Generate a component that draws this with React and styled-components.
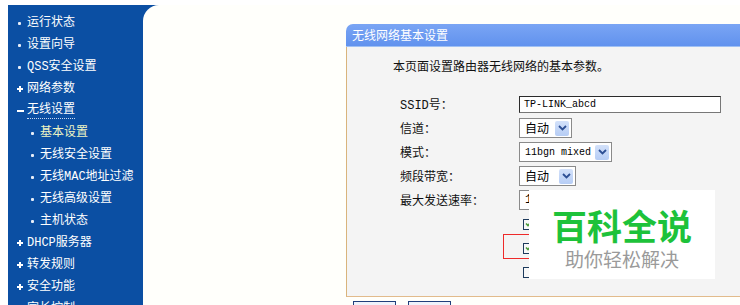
import React from "react";
import styled, { createGlobalStyle, css } from "styled-components";

const Global = createGlobalStyle`
  html, body { margin: 0; padding: 0; background: #ffffff; overflow: hidden; }
  body { font-family: "Liberation Mono", "Noto Sans CJK SC", monospace; font-size: 12px; }
`;

const Page = styled.div`
  position: relative;
  width: 740px;
  height: 305px;
  overflow: hidden;
  padding: 5px 0 0 8px;
  box-sizing: border-box;
`;

const Frame = styled.div`
  display: flex;
  background: #0b4fa3;
  height: 320px;
`;

const Sidebar = styled.ul`
  list-style: none;
  margin: 0;
  padding: 7px 0 0 0;
  width: 135px;
  flex: none;
`;

const Item = styled.li`
  height: 22px;
  display: flex;
  align-items: center;
  padding-left: ${(p) => (p.$sub ? 22 : 9)}px;
  color: ${(p) => (p.$active ? "#eef4c4" : "#ffffff")};
  font-size: 12px;
  line-height: 14px;
  white-space: nowrap;
`;

const Marker = styled.span`
  width: 10px;
  min-width: 10px;
  height: 10px;
  position: relative;
  flex: none;
  ${(p) =>
    p.$kind === "dot" &&
    css`
      &::before {
        content: "";
        position: absolute;
        left: 1px;
        top: 4px;
        width: 3px;
        height: 3px;
        background: #e8eef8;
        border-radius: 1px;
      }
    `}
  ${(p) =>
    p.$kind === "plus" &&
    css`
      &::before, &::after {
        content: "";
        position: absolute;
        background: #ffffff;
      }
      &::before { left: 0px; top: 4px; width: 6px; height: 2px; }
      &::after { left: 2px; top: 2px; width: 2px; height: 6px; }
    `}
  ${(p) =>
    p.$kind === "minus" &&
    css`
      &::before {
        content: "";
        position: absolute;
        left: 0px;
        top: 4px;
        width: 7px;
        height: 2px;
        background: #ffffff;
      }
    `}
`;

const Label = styled.span`
  ${(p) =>
    p.$focus &&
    css`
      border-bottom: 1px dotted #c8d8f0;
      padding-bottom: 1px;
    `}
`;

const Main = styled.div`
  flex: 1;
  background: #fffffb;
  border-top-left-radius: 16px;
  overflow: hidden;
  padding: 19px 0 0 203px;
`;

const Panel = styled.section`
  width: 430px;
`;

const PanelHeader = styled.div`
  height: 23px;
  background: linear-gradient(#7aa5f4, #6192ee);
  border-top-left-radius: 7px;
  color: #ffffff;
  font-size: 12px;
  display: flex;
  align-items: center;
  padding-left: 6px;
  border-bottom: 1px solid #9fc0f4;
  box-sizing: border-box;
`;

const PanelBody = styled.div`
  height: 250px;
  box-sizing: border-box;
  background: #f4f4f4;
  border-left: 1px solid #d9b47c;
  border-bottom: 1px solid #e2bb8c;
  padding: 13px 0 0 46px;
`;

const Intro = styled.p`
  margin: 0;
  line-height: 16px;
  color: #111;
  font-size: 12px;
`;

const Form = styled.div`
  margin-top: 16px;
  padding-left: 7px;
  display: grid;
  grid-template-columns: 119px auto;
  grid-auto-rows: 24px;
  align-items: center;
`;

const FieldLabel = styled.span`
  color: #111;
  font-size: 12px;
`;

const Control = styled.div`
  display: flex;
  align-items: center;
  position: relative;
  height: 100%;
`;

const TextBox = styled.div`
  width: ${(p) => p.$w}px;
  height: 17px;
  box-sizing: border-box;
  border: 1px solid #2b2b2b;
  border-right-color: #777;
  border-bottom-color: #777;
  background: #ffffff;
  font-family: "Liberation Mono", monospace;
  font-size: 10px;
  color: #000;
  display: flex;
  align-items: center;
  padding-left: 4px;
`;

const Select = styled.div`
  width: ${(p) => p.$w}px;
  height: 20px;
  box-sizing: border-box;
  border: 1px solid #8a8a8a;
  background: #ffffff;
  display: flex;
  align-items: center;
  justify-content: space-between;
  padding: 0 2px 0 5px;
  font-size: 12px;
  color: #000;
  ${(p) =>
    p.$mono &&
    css`
      font-family: "Liberation Mono", monospace;
      font-size: 10px;
    `}
`;

const Arrow = styled.span`
  width: 14px;
  height: 15px;
  background: linear-gradient(#d3e1fa, #b6cdf5);
  border-radius: 2px;
  display: flex;
  align-items: center;
  justify-content: center;
`;

const Check = styled.span`
  width: 11px;
  height: 11px;
  box-sizing: border-box;
  border: 1px solid #1d3a5c;
  background: #f8f8f8;
  margin-left: 4px;
  display: flex;
  align-items: center;
  justify-content: center;
`;

const CheckRow = styled.div`
  grid-column: 2;
  height: ${(p) => p.$h}px;
  display: flex;
  align-items: center;
  position: relative;
  ${(p) =>
    p.$flag &&
    css`
      &::before {
        content: "";
        position: absolute;
        left: -16px;
        top: -2px;
        width: 110px;
        height: 25px;
        border: 1px solid #ee2a2a;
        box-sizing: border-box;
      }
    `}
`;

const Spacer = styled.div`
  grid-column: 1;
`;

const Buttons = styled.div`
  display: flex;
  gap: 12px;
  margin: 4px 0 0 7px;
`;

const Btn = styled.div`
  width: 43px;
  height: 20px;
  box-sizing: border-box;
  border: 1px solid #203f7c;
  background: #eef2fb;
`;

const Watermark = styled.div`
  position: absolute;
  left: 529px;
  top: 190px;
  width: 186px;
  height: 89px;
  background: #ffffff;
  display: flex;
  flex-direction: column;
  align-items: center;
  padding-top: 15px;
  box-sizing: border-box;
  font-family: "Noto Sans CJK SC", sans-serif;
`;

const WmTitle = styled.div`
  color: #1dc23a;
  font-size: 35px;
  font-weight: 700;
  line-height: 40px;
`;

const WmSub = styled.div`
  color: #9a9a9a;
  font-size: 19px;
  line-height: 24px;
  margin-top: 2px;
`;

const Chevron = () => (
  <svg width="9" height="6" viewBox="0 0 9 6">
    <path d="M1 1 L4.5 4.5 L8 1" fill="none" stroke="#2d4f94" strokeWidth="1.8" />
  </svg>
);

const Tick = () => (
  <svg width="7" height="6" viewBox="0 0 7 6">
    <path d="M1 2.5 L3 4.5 L6 1" fill="none" stroke="#4a9a3a" strokeWidth="1.6" />
  </svg>
);

const menu = [
  { kind: "dot", text: "运行状态" },
  { kind: "dot", text: "设置向导" },
  { kind: "dot", text: "QSS安全设置" },
  { kind: "plus", text: "网络参数" },
  { kind: "minus", text: "无线设置", focus: true },
  { kind: "dot", text: "基本设置", sub: true, active: true },
  { kind: "dot", text: "无线安全设置", sub: true },
  { kind: "dot", text: "无线MAC地址过滤", sub: true },
  { kind: "dot", text: "无线高级设置", sub: true },
  { kind: "dot", text: "主机状态", sub: true },
  { kind: "plus", text: "DHCP服务器" },
  { kind: "plus", text: "转发规则" },
  { kind: "plus", text: "安全功能" },
  { kind: "plus", text: "家长控制" },
];

export default function App() {
  return (
    <Page>
      <Global />
      <Frame>
        <Sidebar>
          {menu.map((m) => (
            <Item key={m.text} $sub={m.sub} $active={m.active}>
              <Marker $kind={m.kind} />
              <Label $focus={m.focus}>{m.text}</Label>
            </Item>
          ))}
        </Sidebar>
        <Main>
          <Panel>
            <PanelHeader>无线网络基本设置</PanelHeader>
            <PanelBody>
              <Intro>本页面设置路由器无线网络的基本参数。</Intro>
              <Form>
                <FieldLabel>SSID号：</FieldLabel>
                <Control>
                  <TextBox $w={202}>TP-LINK_abcd</TextBox>
                </Control>
                <FieldLabel>信道：</FieldLabel>
                <Control>
                  <Select $w={53}>
                    自动
                    <Arrow><Chevron /></Arrow>
                  </Select>
                </Control>
                <FieldLabel>模式：</FieldLabel>
                <Control>
                  <Select $w={93} $mono>
                    11bgn mixed
                    <Arrow><Chevron /></Arrow>
                  </Select>
                </Control>
                <FieldLabel>频段带宽：</FieldLabel>
                <Control>
                  <Select $w={57}>
                    自动
                    <Arrow><Chevron /></Arrow>
                  </Select>
                </Control>
                <FieldLabel>最大发送速率：</FieldLabel>
                <Control>
                  <Select $w={120}>1</Select>
                </Control>
                <Spacer />
                <CheckRow $h={28}>
                  <Check><Tick /></Check>
                </CheckRow>
                <Spacer />
                <CheckRow $h={24} $flag>
                  <Check><Tick /></Check>
                </CheckRow>
                <Spacer />
                <CheckRow $h={20}>
                  <Check />
                </CheckRow>
              </Form>
            </PanelBody>
            <Buttons>
              <Btn />
              <Btn />
            </Buttons>
          </Panel>
        </Main>
      </Frame>
      <Watermark>
        <WmTitle>百科全说</WmTitle>
        <WmSub>助你轻松解决</WmSub>
      </Watermark>
    </Page>
  );
}
